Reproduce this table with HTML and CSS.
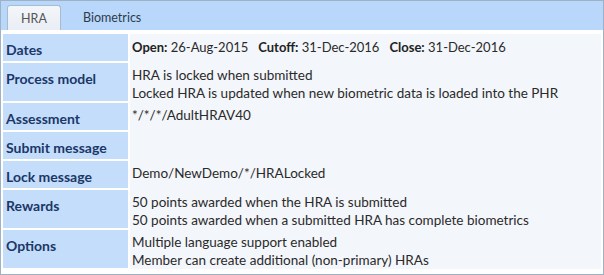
FILE: index.html
```html
<!DOCTYPE html>
<html lang="en">
<head>
<meta charset="UTF-8">
<title>HRA settings</title>
<link rel="stylesheet" href="styles.css">
</head>
<body>

<div class="panel">
  <div class="tabs">
    <span class="tab active">HRA</span>
    <span class="tab">Biometrics</span>
  </div>

  <div class="tab-body">
    <table class="details">
      <tr>
        <th>Dates</th>
        <td class="dates"><b>Open:</b> 26-Aug-2015 &nbsp; <b>Cutoff:</b> 31-Dec-2016 &nbsp; <b>Close:</b> 31-Dec-2016</td>
      </tr>
      <tr>
        <th>Process model</th>
        <td>HRA is locked when submitted<br>Locked HRA is updated when new biometric data is loaded into the PHR</td>
      </tr>
      <tr>
        <th>Assessment</th>
        <td>*/*/*/AdultHRAV40</td>
      </tr>
      <tr>
        <th>Submit message</th>
        <td></td>
      </tr>
      <tr>
        <th>Lock message</th>
        <td>Demo/NewDemo/*/HRALocked</td>
      </tr>
      <tr>
        <th>Rewards</th>
        <td>50 points awarded when the HRA is submitted<br>50 points awarded when a submitted HRA has complete biometrics</td>
      </tr>
      <tr>
        <th>Options</th>
        <td>Multiple language support enabled<br>Member can create additional (non-primary) HRAs</td>
      </tr>
    </table>
  </div>
</div>

</body>
</html>
```

FILE: styles.css
```css
body {
    margin: 0;
    font-family: Lato, "Open Sans", sans-serif;
    font-size: 13.5px;
    color: #2a2a2a;
    background: #fff;
}

.panel {
    width: 604px;
    height: 275px;
    box-sizing: border-box;
    border: 1px solid #9fb2c4;
    background: #fff;
}

/* tab strip */
.tabs {
    height: 29px;
    background: #b8d7fb;
    display: flex;
    align-items: flex-end;
    padding-left: 6px;
}

.tab {
    display: block;
    height: 25px;
    line-height: 25px;
    padding: 0 16px;
    font-size: 12.5px;
    color: #2e3b4a;
}

.tab.active {
    width: 54px;
    padding: 0;
    box-sizing: border-box;
    text-align: center;
    color: #555;
    background: linear-gradient(#f3f6fa, #e9eef4);
    border: 1px solid #a8bccf;
    border-bottom: none;
    border-radius: 3px 3px 0 0;
    margin-right: 6px;
}

.tab-body {
    padding: 4px 2px 0 2px;
}

/* settings table */
.details {
    width: 100%;
    border-collapse: collapse;
}

.details th {
    width: 119px;
    text-align: left;
    vertical-align: top;
    padding: 7px 3px 2px 3px;
    line-height: 18px;
    background: #c4ddfa;
    color: #1b3768;
    font-weight: bold;
    font-size: 14px;
    border-bottom: 2px solid #fff;
    border-right: 2px solid #fff;
}

.details td {
    vertical-align: top;
    padding: 4px 4px 0 2px;
    line-height: 18px;
    background: #f3f6fa;
}

.details td.dates {
    font-size: 13px;
}

.details td b {
    color: #222;
}
```
